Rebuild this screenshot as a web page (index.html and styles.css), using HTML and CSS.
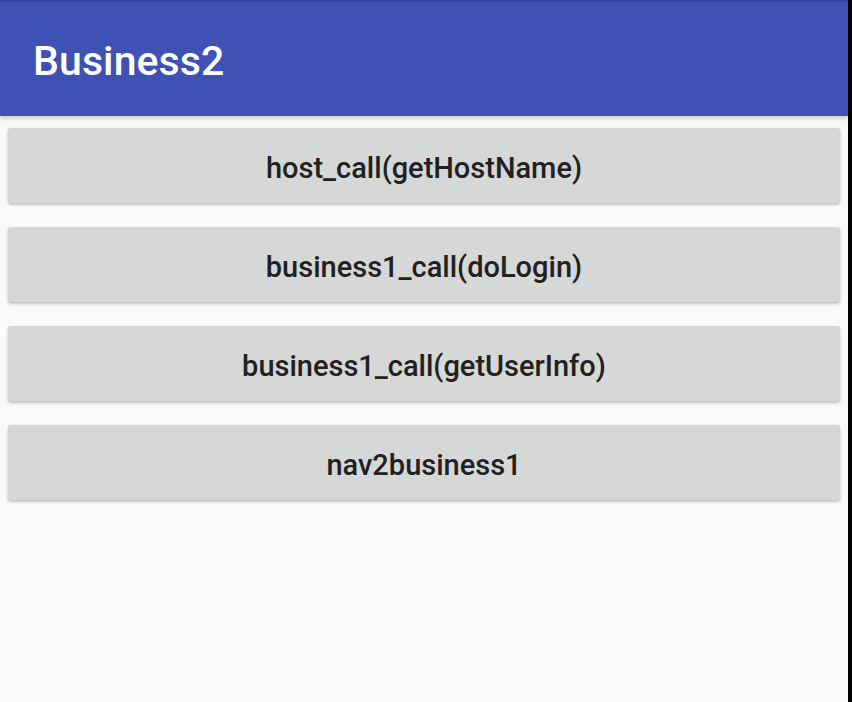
FILE: index.html
```html
<!DOCTYPE html>
<html>
<head>
<meta charset="utf-8">
<link rel="stylesheet" href="styles.css">
</head>
<body>
<div class="screen">
  <div class="app">
    <header class="appbar"><h1 class="title">Business2</h1></header>
    <main class="content">
      <button class="btn">host_call(getHostName)</button>
      <button class="btn">business1_call(doLogin)</button>
      <button class="btn">business1_call(getUserInfo)</button>
      <button class="btn">nav2business1</button>
    </main>
  </div>
  <div class="edge"></div>
</div>
</body>
</html>
```
FILE: styles.css
```css
html, body {
  margin: 0;
  padding: 0;
  height: 100%;
}
body {
  font-family: Roboto, "Noto Sans", sans-serif;
  background: #fafafa;
  overflow: hidden;
}
.screen {
  display: flex;
  height: 702px;
  width: 852px;
}
.app {
  flex: 1;
  display: flex;
  flex-direction: column;
  background: #fafafa;
}
.edge {
  width: 4px;
  background: #000;
}
.appbar {
  height: 116px;
  box-sizing: border-box;
  background: #3f51b5;
  border-top: 2px solid #36479f;
  display: flex;
  align-items: center;
  padding-left: 33px;
  box-shadow: 0 2px 4px rgba(0,0,0,0.22);
  position: relative;
  z-index: 1;
}
.title {
  margin: 0;
  color: #fff;
  font-size: 41px;
  font-weight: 500;
  letter-spacing: 0.1px;
  padding-top: 4px;
}
.content {
  display: flex;
  flex-direction: column;
  gap: 24px;
  padding: 12px 8px 0 8px;
}
.btn {
  height: 75px;
  border: none;
  border-radius: 3px;
  background: #d6d7d7;
  box-shadow: 0 2px 3px rgba(0,0,0,0.22), 0 0 1px rgba(0,0,0,0.12);
  font-family: Roboto, "Noto Sans", sans-serif;
  font-size: 29px;
  font-weight: 500;
  color: #212121;
  padding: 0;
  padding-top: 4px;
}
```
